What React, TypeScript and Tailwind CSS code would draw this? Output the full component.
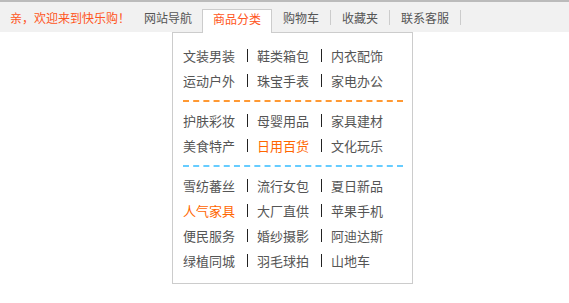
import React from 'react';

const groups: { items: { t: string; hot?: boolean }[][]; line: string }[] = [
  {
    items: [
      [{ t: '文装男装' }, { t: '鞋类箱包' }, { t: '内衣配饰' }],
      [{ t: '运动户外' }, { t: '珠宝手表' }, { t: '家电办公' }],
    ],
    line: 'border-[#ff9933]',
  },
  {
    items: [
      [{ t: '护肤彩妆' }, { t: '母婴用品' }, { t: '家具建材' }],
      [{ t: '美食特产' }, { t: '日用百货', hot: true }, { t: '文化玩乐' }],
    ],
    line: 'border-[#66ccff]',
  },
  {
    items: [
      [{ t: '雪纺蕃丝' }, { t: '流行女包' }, { t: '夏日新品' }],
      [{ t: '人气家具', hot: true }, { t: '大厂直供' }, { t: '苹果手机' }],
      [{ t: '便民服务' }, { t: '婚纱摄影' }, { t: '阿迪达斯' }],
      [{ t: '绿植同城' }, { t: '羽毛球拍' }, { t: '山地车' }],
    ],
    line: '',
  },
];

function Row({ cells }: { cells: { t: string; hot?: boolean }[] }) {
  return (
    <div className="flex items-center h-[25px] leading-[25px]">
      {cells.map((c, i) => (
        <React.Fragment key={c.t}>
          {i > 0 && <span className="w-[1px] h-[13px] bg-[#222] ml-[12px] mr-[9px]" />}
          <span className={'w-[52px] whitespace-nowrap ' + (c.hot ? 'text-[#ff6600]' : 'text-[#555]')}>{c.t}</span>
        </React.Fragment>
      ))}
    </div>
  );
}

export default function App() {
  return (
    <div className="w-[569px] h-[303px] bg-white font-['Noto_Sans_CJK_SC',sans-serif] text-[12px]">
      <div className="h-[32px] bg-[#f1f1f1] border-t-2 border-[#bbb] flex items-end">
        <div className="h-[30px] leading-[31px] pl-[10px] text-[#ff5522] w-[134px]">亲，欢迎来到快乐购！</div>
        <div className="h-[30px] leading-[31px] px-[10px] text-[#555]">网站导航</div>
        <div className="relative mb-[-1px]">
          <div className="relative z-10 h-[24px] leading-[15px] pt-[1px] px-[10px] bg-white border border-b-0 border-[#ccc] text-[#ff5522] w-[70px]">
            商品分类
          </div>
          <div className="absolute left-[-30px] top-[23px] w-[241px] bg-white border border-[#ccc] pt-[10px] pb-[10px] pl-[10px] pr-[9px] text-[13px]">
            {groups.map((g, gi) => (
              <div key={gi}>
                {g.items.map((r, ri) => (
                  <Row key={ri} cells={r} />
                ))}
                {g.line && <div className={'border-t-2 border-dashed mt-[7px] mb-[6px] ' + g.line} />}
              </div>
            ))}
          </div>
        </div>
        {['购物车', '收藏夹', '联系客服'].map((t) => (
          <div key={t} className="h-[30px] flex items-center pt-[1px]">
            <span className="text-[#555] pl-[11px] pr-[11px]">{t}</span>
            <span className="w-[1px] h-[15px] bg-[#ccc]" />
          </div>
        ))}
      </div>
    </div>
  );
}
